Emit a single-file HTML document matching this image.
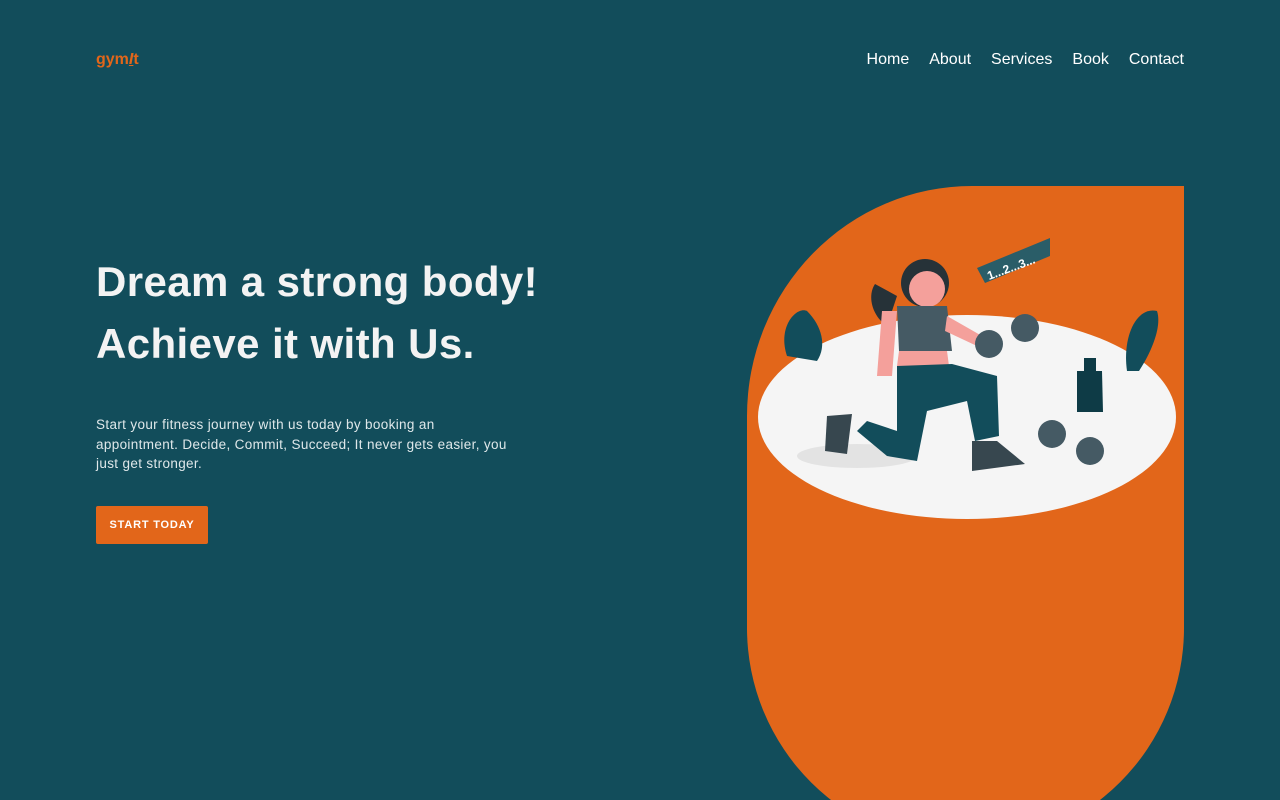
<!DOCTYPE html>
<html><head><meta charset="utf-8"><style>
*{margin:0;padding:0;box-sizing:border-box}
html,body{width:1280px;height:800px;overflow:hidden}
body{background:#124d5b;font-family:"Liberation Sans",sans-serif}
.wrap{position:relative;width:1280px;height:800px;overflow:hidden}
.logo{position:absolute;left:96px;top:51px;color:#e2661a;font-weight:bold;font-size:16px}
nav{position:absolute;right:96px;top:51px;display:flex;gap:20px;color:#fff;font-size:16px}
h1{position:absolute;left:96px;top:251px;color:#f3f3f3;font-size:42px;line-height:62px;font-weight:bold;letter-spacing:.4px}
p{position:absolute;left:96px;top:415px;width:422px;color:#dfe8ea;font-size:13.5px;line-height:19.5px;letter-spacing:.35px}
.btn{position:absolute;left:96px;top:506px;width:112px;height:38px;background:#e2661a;color:#fff;font-size:11px;font-weight:bold;letter-spacing:.8px;display:flex;align-items:center;justify-content:center;border-radius:2px}
svg{position:absolute;left:747px;top:186px;overflow:hidden}
</style></head><body><div class="wrap">
<div class="logo">gym<i style="font-style:italic;text-decoration:underline">I</i>t</div>
<nav><span>Home</span><span>About</span><span>Services</span><span>Book</span><span>Contact</span></nav>
<h1>Dream a strong body!<br>Achieve it with Us.</h1>
<p>Start your fitness journey with us today by booking an appointment. Decide, Commit, Succeed; It never gets easier, you just get stronger.</p>
<div class="btn">START TODAY</div>
<svg width="437" height="614" viewBox="0 0 437 614">
<path d="M225 0 H437 V442 A218 218 0 0 1 219 660 A218 218 0 0 1 0 442 V230 A225 230 0 0 1 225 0 Z" fill="#e2661a"/>
<ellipse cx="220" cy="231" rx="209" ry="102" fill="#f5f5f5"/>
<ellipse cx="110" cy="270" rx="60" ry="12" fill="#e3e3e3"/>
<path d="M40 170 C30 140 50 120 60 125 C75 140 80 160 70 175 Z" fill="#124d5b"/>
<path d="M380 185 C375 150 390 120 410 125 C415 140 405 165 392 185 Z" fill="#124d5b"/>
<path d="M230 82 L303 52 L303 70 L238 97 Z" fill="#2a5d68"/>
<text x="242" y="94" fill="#fff" font-size="12" font-weight="bold" transform="rotate(-20 242 94)">1...2...3...</text>
<path d="M128 98 C120 110 125 130 140 140 L150 110 Z" fill="#263238"/>
<circle cx="178" cy="97" r="24" fill="#263238"/>
<circle cx="180" cy="103" r="18" fill="#f4a09b"/>
<path d="M150 120 L200 120 L205 165 L152 165 Z" fill="#455a64"/>
<path d="M152 165 L200 165 L202 180 L150 180 Z" fill="#f4a09b"/>
<path d="M135 125 L150 125 L145 190 L130 190 Z" fill="#f4a09b"/>
<path d="M200 130 L235 150 L230 160 L198 145 Z" fill="#f4a09b"/>
<path d="M150 180 L205 178 L250 190 L252 250 L228 255 L220 215 L180 225 L170 275 L140 270 L110 245 L120 235 L150 245 Z" fill="#124d5b"/>
<path d="M80 230 L105 228 L100 268 L78 265 Z" fill="#37474f"/>
<path d="M225 255 L250 255 L278 278 L225 285 Z" fill="#37474f"/>
<circle cx="242" cy="158" r="14" fill="#455a64"/><circle cx="278" cy="142" r="14" fill="#455a64"/>
<path d="M330 185 L355 185 L356 226 L330 226 Z" fill="#0e3b46"/><rect x="337" y="172" width="12" height="16" fill="#0e3b46"/>
<circle cx="305" cy="248" r="14" fill="#455a64"/><circle cx="343" cy="265" r="14" fill="#455a64"/>
</svg>
</div></body></html>
